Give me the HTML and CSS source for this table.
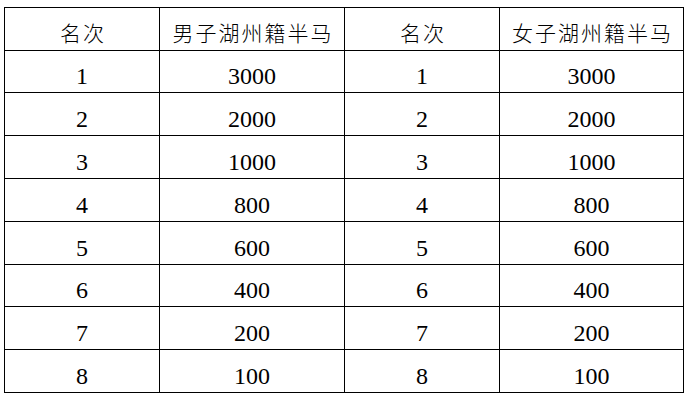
FILE: index.html
```html
<!DOCTYPE html>
<html lang="zh-CN">
<head>
<meta charset="utf-8">
<title>奖金表</title>
<link rel="stylesheet" href="styles.css">
</head>
<body>
<div class="table">
  <div class="cell head">名次</div>
  <div class="cell head">男子湖州籍半马</div>
  <div class="cell head">名次</div>
  <div class="cell head">女子湖州籍半马</div>

  <div class="cell num r41">1</div><div class="cell num r41">3000</div><div class="cell num r41">1</div><div class="cell num r41">3000</div>
  <div class="cell num">2</div><div class="cell num">2000</div><div class="cell num">2</div><div class="cell num">2000</div>
  <div class="cell num">3</div><div class="cell num">1000</div><div class="cell num">3</div><div class="cell num">1000</div>
  <div class="cell num">4</div><div class="cell num">800</div><div class="cell num">4</div><div class="cell num">800</div>
  <div class="cell num">5</div><div class="cell num">600</div><div class="cell num">5</div><div class="cell num">600</div>
  <div class="cell num r41">6</div><div class="cell num r41">400</div><div class="cell num r41">6</div><div class="cell num r41">400</div>
  <div class="cell num">7</div><div class="cell num">200</div><div class="cell num">7</div><div class="cell num">200</div>
  <div class="cell num">8</div><div class="cell num">100</div><div class="cell num">8</div><div class="cell num">100</div>
</div>
</body>
</html>
```
FILE: styles.css
```css
html, body {
  margin: 0;
  padding: 0;
  background: #ffffff;
}

body {
  padding: 7px 0 0 4px;
  color: #000000;
}

.table {
  display: grid;
  grid-template-columns: 154px 184px 154px 183px;
  grid-auto-rows: auto;
  gap: 1px;
  padding: 1px;
  background: #000000;
  width: max-content;
}

.cell {
  background: #ffffff;
  height: 42px;
  box-sizing: border-box;
  display: flex;
  align-items: center;
  justify-content: center;
}

.cell.r41 {
  height: 41px;
}

.num {
  font-family: "Liberation Serif", serif;
  font-size: 24px;
  line-height: 24px;
  padding-top: 9px;
}

.head {
  font-family: "Noto Sans CJK SC", sans-serif;
  font-weight: 300;
  font-size: 21px;
  letter-spacing: 2px;
  line-height: 21px;
  padding-top: 7px;
  padding-left: 2px;
}
```
